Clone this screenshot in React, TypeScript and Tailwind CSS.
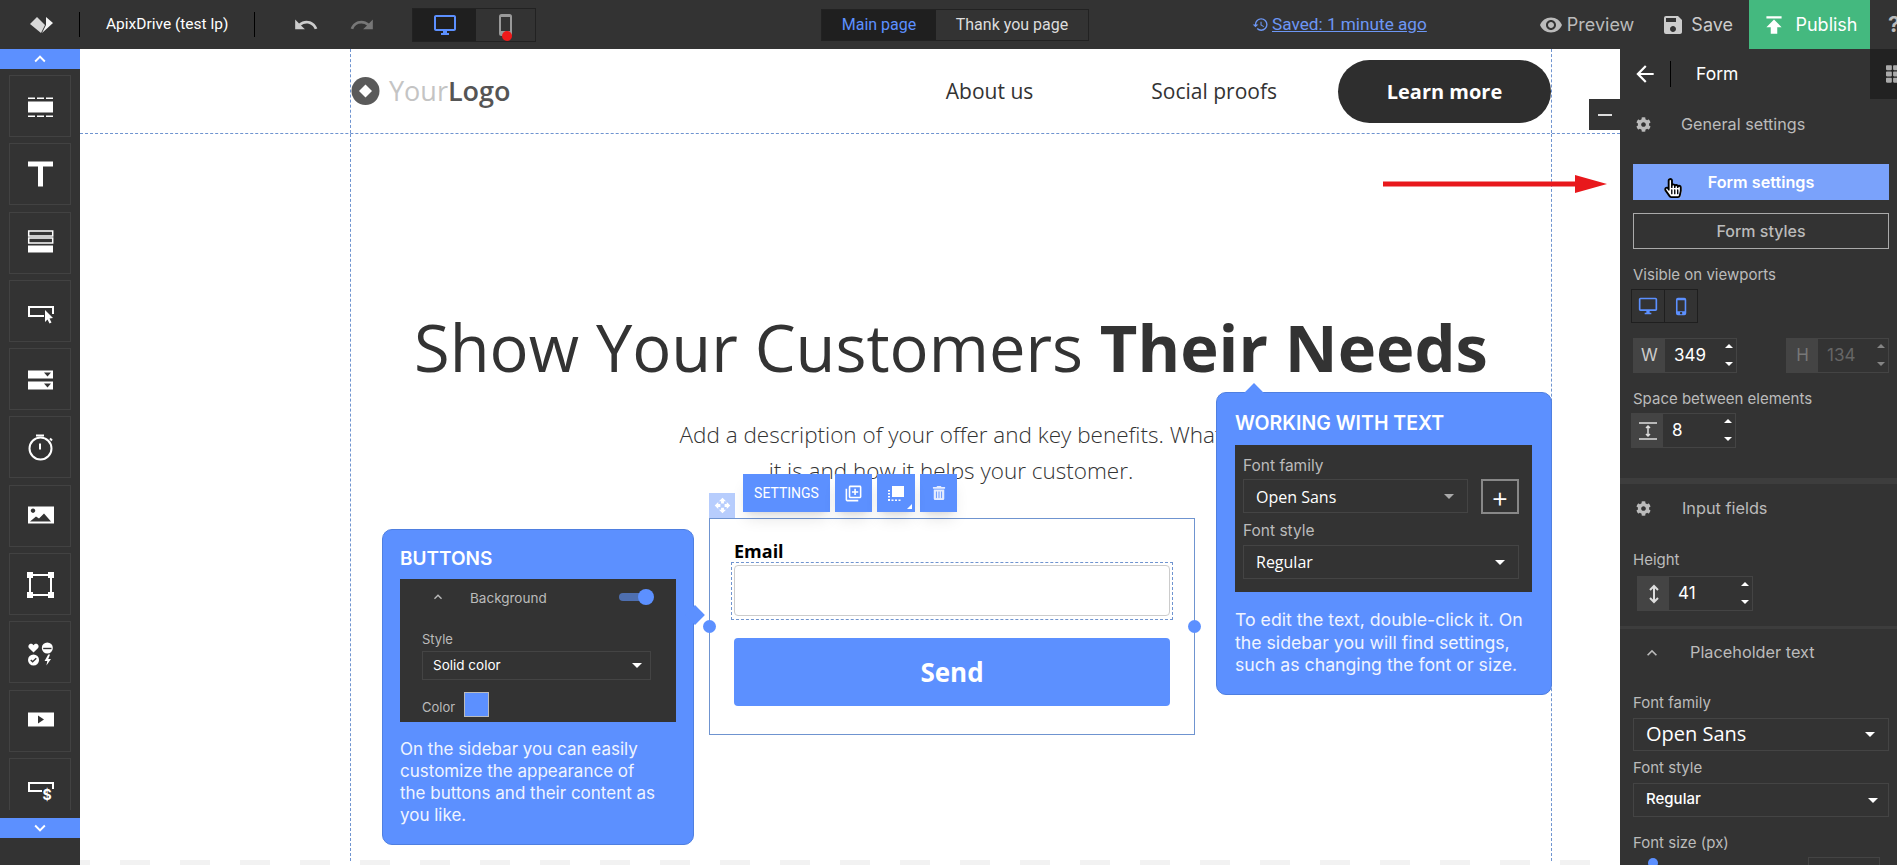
import React from 'react';
import { MdUndo, MdRedo, MdOutlineDesktopWindows, MdPhoneIphone, MdHistory, MdVisibility, MdSave, MdPublish, MdOutlineLibraryAdd, MdOpenWith, MdKeyboardArrowUp, MdKeyboardArrowDown, MdArrowBack } from 'react-icons/md';
import { FaCog, FaTrashAlt, FaHandPointer, FaRegHandPointer, FaTh } from 'react-icons/fa';

const sidebarIcons: React.ReactNode[] = [
  <g key="section" fill="#fff" transform="translate(0 3.5)">
    <path d="M1 1h7v1.500H1zM10 1h7v1.500h-7zM19 1h7v1.500h-7zM1 19h7v1.500H1zM10 19h7v1.500h-7zM19 19h7v1.500h-7z" />
    <rect x="1" y="5" width="25" height="11" />
  </g>,
  <path key="text" fill="#fff" d="M1 .5h25v5H16v20h-5v-20H1z" />,
  <g key="rows" transform="translate(0 .5)">
    <rect x="1.700" y="1.500" width="24" height="5" fill="none" stroke="#fff" strokeWidth="1.500" />
    <rect x="1.700" y="8.500" width="24" height="5" fill="none" stroke="#fff" strokeWidth="1.500" />
    <rect x="1" y="16" width="25" height="7" fill="#fff" />
  </g>,
  <g key="button" transform="translate(0 9)">
    <path d="M26 8V1H2v9h15" fill="none" stroke="#fff" strokeWidth="2" />
    <path d="M18 4l8 8-3.500.5 2 4-2 1-2-4L18 16z" fill="#fff" />
  </g>,
  <g key="selects" fill="#fff" transform="translate(0 3.500)">
    <path fillRule="evenodd" d="M1 1h25v8H1zM17 3l3.500 4L24 3z" />
    <path fillRule="evenodd" d="M1 12h25v8H1zM17 14l3.500 4L24 14z" />
  </g>,
  <g key="timer" fill="none" stroke="#fff" strokeWidth="2" transform="translate(0 -.5)">
    <path d="M9 2h8M13 10v6" />
    <circle cx="13.500" cy="15" r="11" />
    <path d="M23 5l2 2" />
  </g>,
  <g key="image" transform="translate(0 4.500)">
    <path fillRule="evenodd" fill="#fff" d="M1 0h26v17H1zM3 15h21l-7-8-5 5-3-2zM6 2a2.200 2.200 0 1 0 .01 0z" />
  </g>,
  <g key="frame" transform="translate(0 1)">
    <rect x="3" y="3" width="21" height="20" fill="none" stroke="#fff" strokeWidth="2" />
    <path fill="#fff" d="M0 0h6v6H0zM21 0h6v6h-6zM0 20h6v6H0zM21 20h6v6h-6z" />
  </g>,
  <g key="mixed" transform="translate(1 3.500) scale(.92)">
    <path fill="#fff" d="M6 11L1 6c-2-3 2-7 5-3 3-4 7 0 5 3z" />
    <circle cx="21" cy="6" r="6" fill="#fff" />
    <path d="M16.500 6.500h9" stroke="#333" strokeWidth="1.500" />
    <circle cx="6" cy="19" r="6" fill="#fff" />
    <path d="M3 19l2 2 4-4" stroke="#333" strokeWidth="1.500" fill="none" />
    <path fill="#fff" d="M22 13l-4 7h3l-1 5 5-7h-3l2-5z" />
  </g>,
  <path key="video" fill="#fff" fillRule="evenodd" transform="translate(0 5.500)" d="M1 0h26v14H1zM11 3v8l6-4z" />,
  <g key="price" transform="translate(0 7)">
    <path d="M26 7V1H2v8h13" fill="none" stroke="#fff" strokeWidth="2" />
    <text x="20" y="18" fontSize="14" fontWeight="700" fill="#fff" textAnchor="middle" fontFamily="Inter, sans-serif">$</text>
  </g>,
];

const Tile = ({ children }: { children: React.ReactNode }) => (
  <div className="w-[62px] h-[62px] shrink-0 border border-[#424242] flex items-center justify-center">
    <svg width="27" height="27" viewBox="0 0 27 27" className="overflow-visible">{children}</svg>
  </div>
);

const Spinner = ({ dim }: { dim?: boolean }) => (
  <div className={`absolute right-[3px] top-[5px] bottom-[6px] flex flex-col justify-between ${dim ? 'opacity-40' : ''}`}>
    <div className="w-0 h-0 border-x-[4px] border-x-transparent border-b-[4px] border-b-white" />
    <div className="w-0 h-0 border-x-[4px] border-x-transparent border-t-[4px] border-t-white" />
  </div>
);

const NumberBox = ({ label, value, width, dim }: { label: React.ReactNode; value: string; width: string; dim?: boolean }) => (
  <div className={`relative flex h-[35px] border border-[#444] ${width}`}>
    <div className={`w-[31px] shrink-0 bg-[#444] flex items-center justify-center text-[17px] ${dim ? 'text-[#777]' : 'text-[#ccc]'}`}>{label}</div>
    <div className={`pl-[9px] flex items-center text-[17px] ${dim ? 'text-[#666]' : 'text-white'}`}>{value}</div>
    <Spinner dim={dim} />
  </div>
);

const Caret = ({ gray }: { gray?: boolean }) => (
  <div className={`w-0 h-0 border-x-[5px] border-x-transparent border-t-[5px] ${gray ? 'border-t-[#aaa]' : 'border-t-white'}`} />
);

const Select = ({ text, className }: { text: string; className: string }) => (
  <div className={`flex items-center justify-between border border-[#444] text-white ${className}`}>
    <span className="pb-[2px]">{text}</span>
    <Caret />
  </div>
);

export default function App() {
  return (
    <div className="h-screen w-screen overflow-hidden flex flex-col bg-[#333] font-['Inter',sans-serif]">
      {/* top bar */}
      <header className="h-[49px] shrink-0 flex items-center bg-[#333] text-[#ccc]">
        <div className="w-[80px] h-[25px] shrink-0 flex items-center border-r border-black pl-[30px]">
          <svg width="23" height="18" viewBox="0 0 23 18">
            <path d="M0 8L7 1l8 8-4 8z" fill="#d8d8d8" />
            <path d="M16 1l7 6-11 10 4-8z" fill="#f4f4f4" />
          </svg>
        </div>
        <div className="w-[175px] h-[25px] shrink-0 flex items-center border-r border-black pl-[26px] font-['Roboto',sans-serif] text-[15.500px] text-white">ApixDrive (test lp)</div>
        <MdUndo className="ml-[38px] text-[#ccc]" size={26} />
        <MdRedo className="ml-[30px] text-[#777]" size={26} />
        <div className="ml-[37px] w-[124px] h-[34px] flex border border-[#222]">
          <div className="w-[63px] bg-[#1f1f1f] flex items-center justify-center text-[#5c90ff]"><MdOutlineDesktopWindows size={24} /></div>
          <div className="relative flex-1 flex items-center justify-center text-[#999]">
            <MdPhoneIphone size={24} />
            <span className="absolute left-[26px] top-[22px] w-[10px] h-[10px] rounded-full bg-[#f01a1a]" />
          </div>
        </div>
        <div className="ml-[285px] w-[268px] h-[32px] flex border border-[#222] font-['Roboto',sans-serif] text-[16px]">
          <div className="w-[114px] bg-[#1f1f1f] text-[#5c90ff] flex items-center justify-center">Main page</div>
          <div className="flex-1 flex items-center justify-center text-[#ddd]">Thank you page</div>
        </div>
        <div className="ml-[163px] flex items-center text-[#6d97f5] font-['Roboto',sans-serif] text-[17.200px] underline">
          <MdHistory size={17} />
          <span className="ml-[3px]">Saved: 1 minute ago</span>
        </div>
        <MdVisibility className="ml-auto text-[#bbb]" size={24} />
        <span className="ml-[4px] text-[18px] text-[#bbb]">Preview</span>
        <MdSave className="ml-[27px] text-[#ccc]" size={24} />
        <span className="ml-[6px] text-[18px]">Save</span>
        <div className="ml-[16px] w-[121px] h-full bg-[#44b97f] flex items-center justify-center gap-[8px] text-white text-[18px]">
          <MdPublish size={26} />
          <span>Publish</span>
        </div>
        <span className="w-[27px] pl-[18px] overflow-hidden text-[22px] font-bold text-[#bbb]">?</span>
      </header>

      <div className="flex-1 flex min-h-0">
        {/* left sidebar */}
        <aside className="w-[80px] shrink-0 flex flex-col">
          <div className="h-[20px] bg-[#5c90ff] flex items-center justify-center text-white"><MdKeyboardArrowUp size={22} /></div>
          <div className="mt-[6px] h-[735px] pl-[9px] flex flex-col gap-[6.300px] overflow-hidden">
            {sidebarIcons.map((icon, i) => <Tile key={i}>{icon}</Tile>)}
          </div>
          <div className="mt-[8px] h-[20px] bg-[#5c90ff] flex items-center justify-center text-white"><MdKeyboardArrowDown size={22} /></div>
        </aside>

        {/* canvas */}
        <main className="relative flex-1 min-w-0 bg-white overflow-hidden font-['Open_Sans',sans-serif]">
          <div className="h-[85px] border-b border-dashed border-[#6f94d0]">
            <div className="ml-[270px] w-[1202px] h-full border-x border-dashed border-[#6f94d0] flex items-center">
              <svg width="31" height="28" viewBox="0 0 31 28" className="shrink-0">
                <circle cx="14.500" cy="14" r="14" fill="#5a5a5a" />
                <path d="M14.500 7.500l6.500 6.500-6.500 6.500L8 14z" fill="#fff" />
              </svg>
              <span className="ml-[7px] text-[27px] text-[#c4c4c4]">Your<span className="font-semibold text-[#555]">Logo</span></span>
              <span className="ml-auto pt-[2px] text-[21px] text-[#333]">About us</span>
              <span className="ml-[118px] pt-[2px] text-[21px] text-[#333]">Social proofs</span>
              <div className="ml-[61px] w-[213px] h-[63px] pt-[1px] rounded-full bg-[#2e2e2e] flex items-center justify-center text-white text-[20px] font-bold">Learn more</div>
            </div>
          </div>
          <div className="ml-[270px] w-[1202px] h-[727px] pt-[171px] border-x border-dashed border-[#6f94d0]">
            <h1 className="text-center text-[65px] leading-[84px] text-[#333]">Show Your Customers <b>Their Needs</b></h1>
            <p className="mt-[28px] mx-auto w-[560px] text-center text-[22.500px] leading-[36px] font-light text-[#333]">Add a description of your offer and key benefits. What it is and how it helps your customer.</p>
            {/* form */}
            <div className="relative mt-[29px] ml-[358px] w-[486px] h-[217px] border border-[#6f94d0]">
              <div className="absolute left-[-1px] top-[-26px] w-[26px] h-[25px] bg-[#b7cdfd] flex items-center justify-center text-white"><MdOpenWith size={17} /></div>
              <div className="absolute left-[33px] top-[-45px] flex gap-[5px] text-white">
                <div className="w-[87px] h-[38px] bg-[#5c90ff] shadow-lg flex items-center justify-center text-[14px] font-['Roboto',sans-serif]">SETTINGS</div>
                <div className="w-[37px] h-[38px] bg-[#5c90ff] shadow-lg flex items-center justify-center"><MdOutlineLibraryAdd size={19} /></div>
                <div className="relative w-[38px] h-[38px] bg-[#5c90ff] shadow-lg flex items-center justify-center">
                  <svg width="16" height="15" viewBox="0 0 16 15" fill="#fff">
                    <rect x="4" y="0" width="12" height="11" />
                    <path d="M0 4h2v1.500H0zM0 7h2v1.500H0zM0 10h2v1.500H0zM0 13h2v2H0zM3.500 13.500h2V15h-2zM7 13.500h2V15H7zM10.500 13.500h2V15h-2z" />
                  </svg>
                  <span className="absolute right-[3px] bottom-[3px] w-0 h-0 border-l-[5px] border-l-transparent border-b-[5px] border-b-white" />
                </div>
                <div className="w-[37px] h-[38px] bg-[#5c90ff] shadow-lg flex items-center justify-center text-[#e4ecff]"><FaTrashAlt size={14} /></div>
              </div>
              <div className="absolute left-[-7px] top-[101px] w-[13px] h-[13px] rounded-full bg-[#5c90ff]" />
              <div className="absolute right-[-7px] top-[101px] w-[13px] h-[13px] rounded-full bg-[#5c90ff]" />
              <div className="mx-[21px] pt-[20px] relative">
                <div className="ml-[3px] text-[18px] leading-[24px] font-bold text-black">Email</div>
                <div className="border border-dashed border-[#6f94d0] -mt-[1px] p-[2px] h-[58px]">
                  <div className="h-[51px] border border-[#ccc] rounded-[4px]" />
                </div>
                <div className="mt-[18px] mx-[3px] h-[68px] rounded-[4px] bg-[#5c90ff] flex items-center justify-center text-white text-[26px] font-bold">Send</div>
              </div>
            </div>
          </div>
          <div className="absolute left-0 bottom-0 h-[5px] flex gap-[30px]">
            <span className="w-[10px] bg-[#f2f2f2]" />
            {Array.from({ length: 26 }).map((_, i) => <span key={i} className="w-[30px] bg-[#f2f2f2]" />)}
          </div>

          {/* buttons tip */}
          <div className="absolute left-[302px] top-[480px] w-[312px] h-[316px] rounded-[10px] bg-[#5c90ff] border border-[#4f7fe0] text-white px-[17px]">
            <div className="absolute right-[-9px] top-[78px] w-[14px] h-[14px] rotate-45 bg-[#5c90ff]" />
            <div className="pt-[17px] text-[19px] leading-[24px] font-semibold font-['Inter',sans-serif]">BUTTONS</div>
            <div className="relative mt-[8px] w-[276px] h-[143px] bg-[#333] font-['Inter',sans-serif] text-[13px] text-[#bbb]">
              <MdKeyboardArrowUp className="absolute left-[30px] top-[10px]" size={16} />
              <span className="absolute left-[70px] top-[9px] text-[13.500px]">Background</span>
              <div className="absolute left-[219px] top-[14px] w-[30px] h-[8px] rounded-full bg-[#4e6fb0]" />
              <div className="absolute left-[238px] top-[10px] w-[16px] h-[16px] rounded-full bg-[#5c90ff]" />
              <span className="absolute left-[22px] top-[51px]">Style</span>
              <div className="absolute left-[22px] top-[72px] w-[229px] h-[29px] border border-[#444] pl-[10px] pr-[8px] flex items-center justify-between text-[13.500px] text-white"><span>Solid color</span><Caret /></div>
              <span className="absolute left-[22px] top-[119px]">Color</span>
              <div className="absolute left-[64px] top-[113px] w-[25px] h-[25px] bg-[#5c90ff] border border-[#bbb]" />
            </div>
            <p className="mt-[16px] w-[263px] text-[17px] leading-[22px] font-['Inter',sans-serif] text-[#f0f4ff]">On the sidebar you can easily customize the appearance of the buttons and their content as you like.</p>
          </div>

          {/* text tip */}
          <div className="absolute left-[1136px] top-[343px] w-[336px] h-[303px] rounded-[10px] bg-[#5c90ff] border border-[#4f7fe0] text-white px-[18px]">
            <div className="absolute left-[30px] top-[-7px] w-[14px] h-[14px] rotate-45 bg-[#5c90ff]" />
            <div className="relative pt-[17px] text-[19.500px] leading-[26px] font-semibold font-['Inter',sans-serif]">WORKING WITH TEXT</div>
            <div className="relative mt-[9px] w-[297px] h-[147px] bg-[#333] font-['Inter',sans-serif] text-[#bbb]">
              <span className="absolute left-[8px] top-[9px] text-[15.500px]">Font family</span>
              <div className="absolute left-[8px] top-[34px] w-[225px] h-[34px] border border-[#444] pl-[12px] pr-[13px] flex items-center justify-between text-[16px] text-white font-['Open_Sans',sans-serif]"><span className="pt-[1px]">Open Sans</span><Caret gray /></div>
              <div className="absolute left-[246px] top-[34px] w-[38px] h-[35px] border-2 border-[#888] flex items-center justify-center text-white text-[28px] font-light">+</div>
              <span className="absolute left-[8px] top-[74px] text-[15.500px]">Font style</span>
              <div className="absolute left-[8px] top-[100px] w-[276px] h-[34px] border border-[#444] pl-[12px] pr-[13px] flex items-center justify-between text-[16px] text-white font-['Open_Sans',sans-serif]"><span>Regular</span><Caret /></div>
            </div>
            <p className="mt-[17px] text-[17.700px] leading-[22.500px] font-['Inter',sans-serif] text-[#f0f4ff]">To edit the text, double-click it. On the sidebar you will find settings, such as changing the font or size.</p>
          </div>

          {/* red arrow */}
          <svg className="absolute left-[1303px] top-[123px]" width="225" height="24" viewBox="0 0 225 24">
            <path d="M0 9.500h192V3l32 9-32 9v-6.500H0z" fill="#e8181c" />
          </svg>

          {/* collapse */}
          <div className="absolute right-0 top-[50px] w-[31px] h-[31px] bg-[#333] flex items-center justify-center">
            <span className="w-[14px] h-[2px] bg-[#ddd]" />
          </div>
        </main>

        {/* right panel */}
        <aside className="relative w-[277px] shrink-0 bg-[#333] text-[#bbb] text-[15px] overflow-hidden">
          <div className="h-[50px] flex items-center text-white">
            <MdArrowBack className="ml-[12px]" size={26} />
            <span className="ml-[12px] h-[26px] border-l border-black" />
            <span className="ml-[25px] text-[17.500px]">Form</span>
            <div className="absolute right-0 top-0 w-[27px] h-[50px] bg-[#222] flex items-center pl-[16px] overflow-hidden text-[#aaa]"><FaTh size={20} className="shrink-0" /></div>
          </div>
          <div className="mt-[15px] ml-[16px] h-[21px] flex items-center">
            <FaCog size={15} />
            <span className="ml-[30px] text-[16.200px]">General settings</span>
          </div>
          <div className="mt-[29px] ml-[13px] w-[256px] h-[36px] bg-[#7aa2fb] flex items-center justify-center text-white text-[16.200px] font-semibold relative">
            Form settings
            <FaHandPointer className="absolute left-[30px] top-[14px] text-white" size={20} />
            <FaRegHandPointer className="absolute left-[30px] top-[14px] text-black" size={20} />
          </div>
          <div className="mt-[13px] ml-[13px] w-[256px] h-[36px] border border-[#aaa] flex items-center justify-center text-[16px] font-medium">Form styles</div>
          <div className="mt-[17px] ml-[13px] leading-[18px]">Visible on viewports</div>
          <div className="mt-[5px] ml-[11px] w-[67px] h-[34px] flex border border-[#1f1f1f] text-[#5c90ff]">
            <div className="w-[33px] border-r border-[#1f1f1f] flex items-center justify-center"><MdOutlineDesktopWindows size={20} /></div>
            <div className="flex-1 flex items-center justify-center"><MdPhoneIphone size={19} /></div>
          </div>
          <div className="mt-[15px] ml-[13px] flex gap-[49px]">
            <NumberBox label="W" value="349" width="w-[104px]" />
            <NumberBox label="H" value="134" width="w-[103px]" dim />
          </div>
          <div className="mt-[17px] ml-[13px] leading-[18px]">Space between elements</div>
          <div className="mt-[5px] ml-[11px]">
            <NumberBox width="w-[105px]" value="8" label={
              <svg width="20" height="18" viewBox="0 0 20 18" stroke="#ddd" strokeWidth="1.500" fill="none"><path d="M1 1h18M1 17h18M10 4v10M8 6l2-2 2 2M8 12l2 2 2-2" /></svg>
            } />
          </div>
          <div className="mt-[30px] h-[6px] bg-[#3d3d3d]" />
          <div className="mt-[14px] ml-[16px] h-[21px] flex items-center">
            <FaCog size={15} />
            <span className="ml-[31px] text-[16.300px]">Input fields</span>
          </div>
          <div className="mt-[32px] ml-[13px] leading-[18px]">Height</div>
          <div className="mt-[7px] ml-[17px]">
            <NumberBox width="w-[116px]" value="41" label={
              <svg width="12" height="20" viewBox="0 0 12 20" stroke="#ddd" strokeWidth="2" fill="none"><path d="M6 2v16M2 6l4-4 4 4M2 14l4 4 4-4" /></svg>
            } />
          </div>
          <div className="mt-[15px] h-[3px] bg-[#3d3d3d]" />
          <div className="mt-[13px] h-[21px] flex items-center">
            <MdKeyboardArrowUp className="ml-[22px]" size={20} />
            <span className="ml-[28px] text-[16.300px]">Placeholder text</span>
          </div>
          <div className="mt-[31px] ml-[13px] leading-[18px]">Font family</div>
          <div className="mt-[6px] ml-[13px]"><Select text="Open Sans" className="w-[256px] h-[33px] pl-[12px] pr-[13px] text-[20px] font-['Open_Sans',sans-serif]" /></div>
          <div className="mt-[8px] ml-[13px] leading-[18px]">Font style</div>
          <div className="mt-[6px] ml-[13px]"><Select text="Regular" className="w-[256px] h-[34px] pl-[12px] pr-[10px] text-[15px] font-medium" /></div>
          <div className="mt-[17px] ml-[13px] leading-[18px]">Font size (px)</div>
          <div className="absolute left-[28px] top-[809px] w-[10px] h-[10px] rounded-full bg-[#5c90ff]" />
          <div className="absolute left-[188px] top-[808px] w-[72px] h-[30px] border border-[#444]" />
        </aside>
      </div>
    </div>
  );
}
